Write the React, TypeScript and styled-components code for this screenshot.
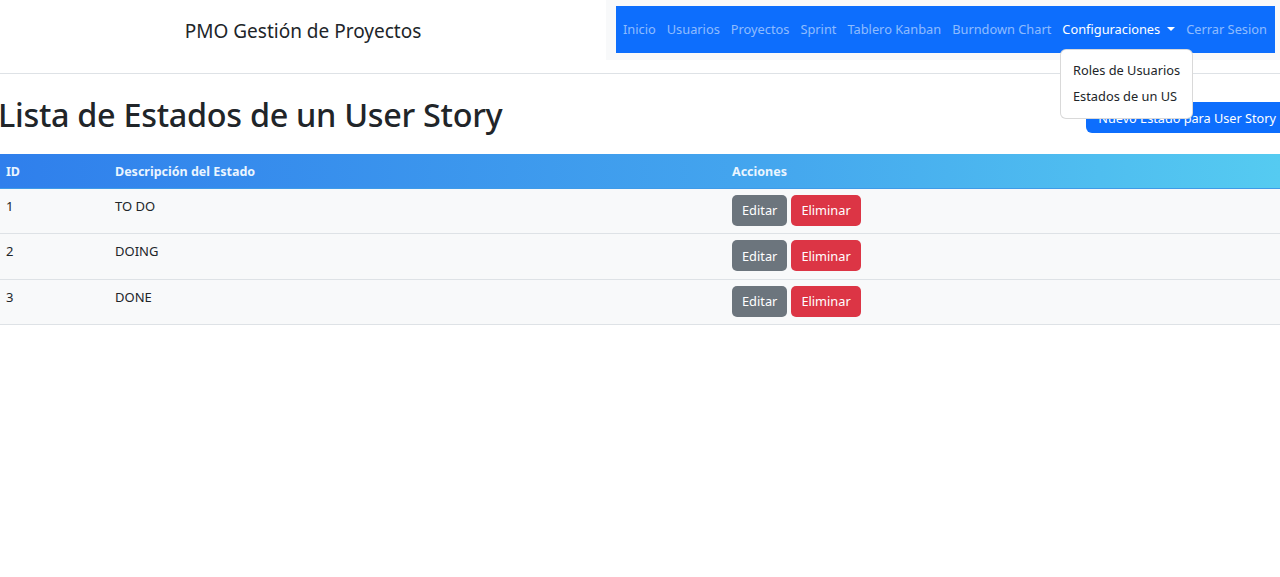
import React from "react";
import styled, { createGlobalStyle } from "styled-components";

const GlobalStyle = createGlobalStyle`
  html, body { margin: 0; padding: 0; background: #fff; overflow: hidden; }
  body { font-family: "Noto Sans", "Open Sans", sans-serif; color: #212529; }
  * { box-sizing: border-box; }
`;

const Header = styled.header`
  display: flex;
  height: 74px;
  border-bottom: 1px solid #dee2e6;
`;

const Brand = styled.div`
  width: 606px;
  flex-shrink: 0;
  display: flex;
  align-items: center;
  justify-content: center;
  font-size: 19px;
  color: #212529;
  padding-bottom: 12px;
`;

const NavWrap = styled.div`
  flex: 1;
  min-width: 0;
  height: 60px;
  background: #f8f9fa;
  padding: 6px 5px 7px 10px;
  position: relative;
`;

const NavBar = styled.nav`
  height: 100%;
  background: #0d6efd;
  display: flex;
  align-items: center;
  padding-left: 3px;
`;

const NavLink = styled.a<{ $active?: boolean }>`
  font-size: 12.8px;
  padding: 0 7px 2px 4px;
  color: ${(p) => (p.$active ? "#ffffff" : "rgba(255,255,255,0.55)")};
  text-decoration: none;
  white-space: nowrap;
  display: flex;
  align-items: center;
`;

const Caret = styled.span`
  display: inline-block;
  margin-left: 7px;
  border-top: 4.5px solid #fff;
  border-left: 4px solid transparent;
  border-right: 4px solid transparent;
`;

const Menu = styled.div`
  position: absolute;
  left: 454px;
  top: 49px;
  width: 133px;
  background: #fff;
  border: 1px solid rgba(0, 0, 0, 0.15);
  border-radius: 6px;
  padding: 8px 0;
  z-index: 10;
`;

const MenuItem = styled.div`
  font-size: 12.8px;
  padding: 3px 12px 5px;
  color: #212529;
  white-space: nowrap;
`;

const TitleRow = styled.div`
  display: flex;
  justify-content: space-between;
  align-items: flex-start;
  height: 80px;
`;

const Title = styled.h1`
  margin: 21px 0 0 -2px;
  font-size: 32.4px;
  font-weight: 500;
  line-height: 1.2;
  letter-spacing: -0.3px;
`;

const PrimaryButton = styled.button`
  margin-top: 28px;
  margin-right: -8px;
  height: 31px;
  padding: 0 12px;
  background: #0d6efd;
  color: #fff;
  border: none;
  border-radius: 6px;
  font-family: inherit;
  font-size: 12.7px;
  white-space: nowrap;
`;

const Table = styled.table`
  width: 100%;
  border-collapse: collapse;
`;

const HeadRow = styled.tr`
  background: linear-gradient(90deg, #2f7fec 0%, #44a6ee 60%, #55cbf1 100%);
`;

const Th = styled.th<{ $w?: number }>`
  text-align: left;
  height: 34px;
  padding: 1px 6px 0;
  font-size: 12.5px;
  font-weight: 700;
  color: #eaf5ff;
  width: ${(p) => (p.$w ? `${p.$w}px` : "auto")};
  border-bottom: 1px solid #3f9be8;
`;

const Tr = styled.tr`
  background: #f8f9fa;
`;

const Td = styled.td`
  vertical-align: top;
  height: 45.5px;
  padding: 8px 6px 0;
  font-size: 13px;
  border-bottom: 1px solid #dee2e6;
`;

const ActionsCell = styled(Td)`
  padding-top: 6px;
`;

const Actions = styled.div`
  display: flex;
  gap: 4px;
`;

const ActionButton = styled.button<{ $variant: "secondary" | "danger" }>`
  height: 31px;
  padding: 0 10px;
  border: none;
  border-radius: 5px;
  font-family: inherit;
  font-size: 12.8px;
  color: #fff;
  background: ${(p) => (p.$variant === "danger" ? "#dc3545" : "#6c757d")};
`;

const rows = [
  { id: 1, desc: "TO DO" },
  { id: 2, desc: "DOING" },
  { id: 3, desc: "DONE" },
];

const navItems = ["Inicio", "Usuarios", "Proyectos", "Sprint", "Tablero Kanban", "Burndown Chart"];

export default function App() {
  return (
    <>
      <GlobalStyle />
      <Header>
        <Brand>PMO Gestión de Proyectos</Brand>
        <NavWrap>
          <NavBar>
            {navItems.map((n) => (
              <NavLink key={n}>{n}</NavLink>
            ))}
            <NavLink $active>
              Configuraciones
              <Caret />
            </NavLink>
            <NavLink>Cerrar Sesion</NavLink>
          </NavBar>
          <Menu>
            <MenuItem>Roles de Usuarios</MenuItem>
            <MenuItem>Estados de un US</MenuItem>
          </Menu>
        </NavWrap>
      </Header>
      <TitleRow>
        <Title>Lista de Estados de un User Story</Title>
        <PrimaryButton>Nuevo Estado para User Story</PrimaryButton>
      </TitleRow>
      <Table>
        <thead>
          <HeadRow>
            <Th $w={109}>ID</Th>
            <Th $w={617}>Descripción del Estado</Th>
            <Th>Acciones</Th>
          </HeadRow>
        </thead>
        <tbody>
          {rows.map((r) => (
            <Tr key={r.id}>
              <Td>{r.id}</Td>
              <Td>{r.desc}</Td>
              <ActionsCell>
                <Actions>
                  <ActionButton $variant="secondary">Editar</ActionButton>
                  <ActionButton $variant="danger">Eliminar</ActionButton>
                </Actions>
              </ActionsCell>
            </Tr>
          ))}
        </tbody>
      </Table>
    </>
  );
}
